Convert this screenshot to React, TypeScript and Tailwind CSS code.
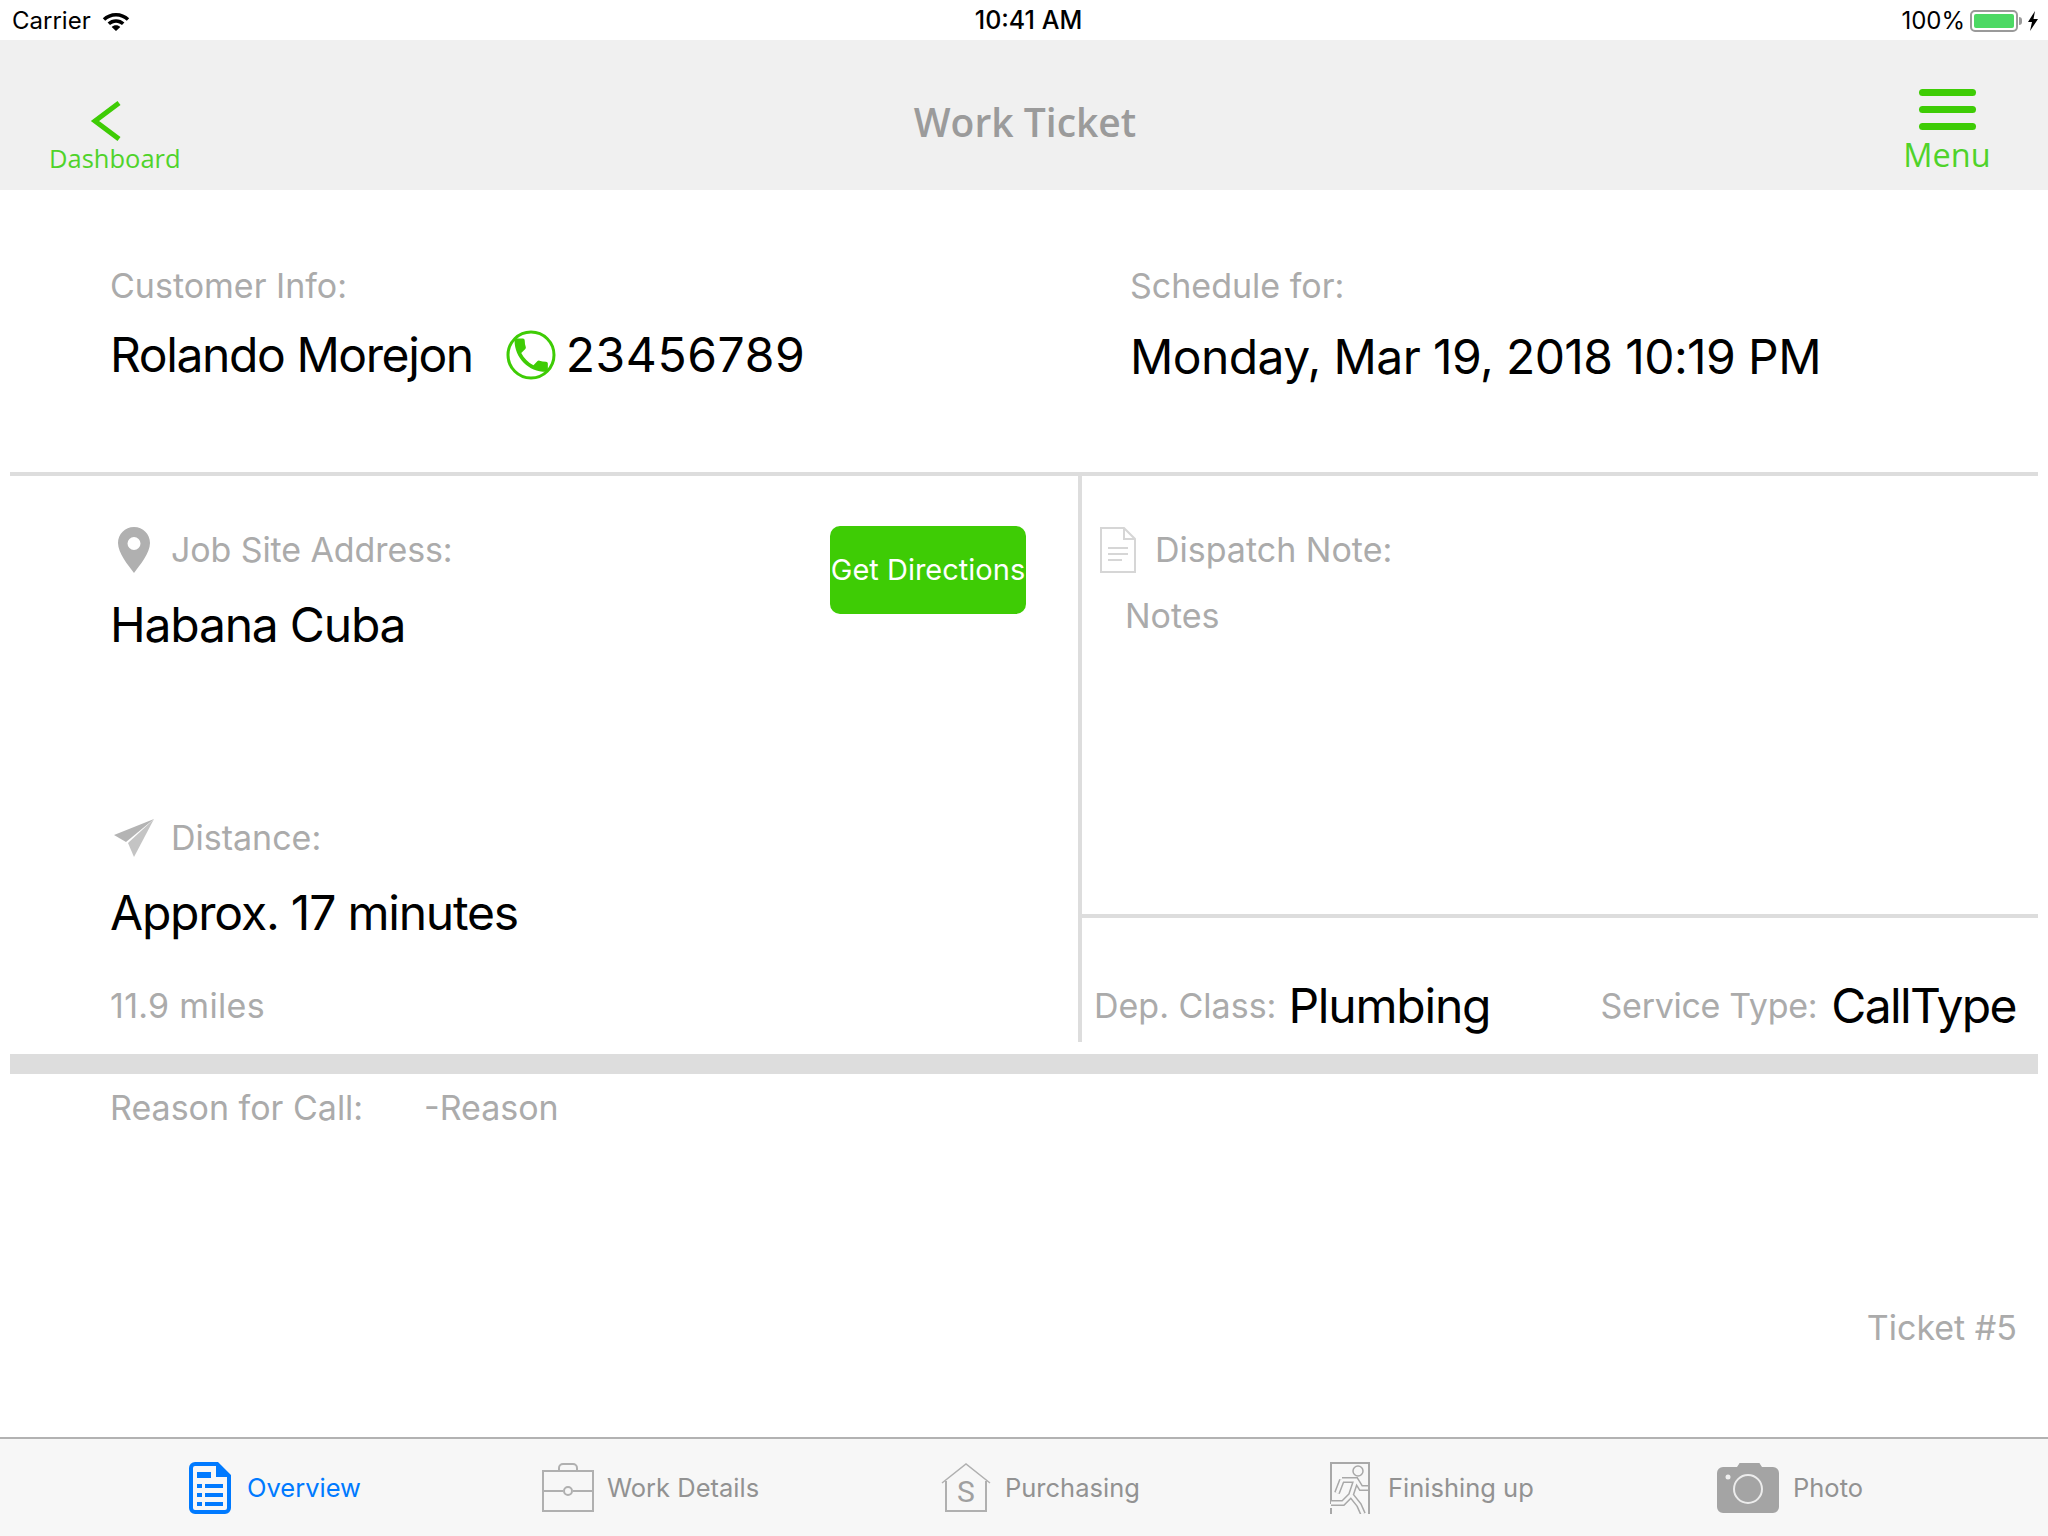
import React from "react";

const Wifi = () => (
  <svg width="30" height="22" viewBox="0 0 30 22" fill="#000">
    <path d="M15 3C9.8 3 5.2 5 1.8 8.2l2.4 2.6C7 8.200 10.800 6.600 15 6.600s8 1.600 10.800 4.200l2.400-2.600C24.800 5 20.200 3 15 3z" />
    <path d="M15 9.200c-3.200 0-6.200 1.200-8.400 3.300l2.400 2.600c1.600-1.500 3.700-2.400 6-2.400s4.400.9 6 2.400l2.400-2.600c-2.200-2.100-5.200-3.300-8.400-3.300z" />
    <path d="M15 15.200c-1.700 0-3.200.6-4.300 1.700L15 21l4.300-4.100c-1.100-1.100-2.600-1.700-4.300-1.700z" />
  </svg>
);

const Battery = () => (
  <div className="flex items-center">
    <div className="w-[48px] h-[22px] rounded-[5px] border-2 border-[#9a9a9a] p-[2px]">
      <div className="w-full h-full rounded-[2px] bg-[#4cd964]" />
    </div>
    <div className="w-[3px] h-[8px] bg-[#9a9a9a] rounded-r-sm ml-[1px]" />
  </div>
);

const Bolt = () => (
  <svg width="12" height="20" viewBox="0 0 12 20" fill="#000">
    <path d="M8 0 1 11h4l-2 9 8-12H6.500z" />
  </svg>
);

const PhoneRing = () => (
  <svg width="50" height="50" viewBox="0 0 50 50" className="shrink-0">
    <circle cx="25" cy="25" r="23" fill="none" stroke="#3ecc05" strokeWidth="3" />
    <g transform="translate(3 3) scale(1.85)">
      <path
        fill="#3ecc05"
        d="M6.620 10.790c1.440 2.830 3.760 5.140 6.590 6.590l2.200-2.200c.27-.27.67-.36 1.020-.24 1.120.37 2.330.57 3.570.57.55 0 1 .45 1 1V20c0 .55-.45 1-1 1-9.390 0-17-7.610-17-17 0-.55.45-1 1-1h3.500c.55 0 1 .45 1 1 0 1.250.2 2.450.57 3.570.11.35.03.74-.25 1.020l-2.200 2.200z"
      />
    </g>
  </svg>
);

const Pin = () => (
  <svg width="34" height="48" viewBox="0 0 34 48">
    <path
      fill="#b0b0b0"
      fillRule="evenodd"
      d="M17 1C8 1 1 8 1 17c0 10 10 22 16 30 6-8 16-20 16-30C33 8 26 1 17 1zm0 10a6.500 6.500 0 1 1 0 13 6.500 6.500 0 0 1 0-13z"
    />
  </svg>
);

const Plane = () => (
  <svg width="42" height="40" viewBox="0 0 42 40">
    <path fill="#b4b4b4" d="M41 1 1 17l12 7z" />
    <path fill="#c4c4c4" d="M41 1 15 25l6 14z" />
  </svg>
);

const DocIcon = () => (
  <svg width="36" height="46" viewBox="0 0 36 46" fill="none" stroke="#d6d6d6" strokeWidth="2">
    <path d="M1 1h23l11 11v33H1z" />
    <path d="M24 1v11h11" />
    <path d="M8 21h20M8 27h20M8 33h14" />
  </svg>
);

const OverviewIcon = () => (
  <svg width="42" height="52" viewBox="0 0 42 52" fill="#007aff">
    <path
      fillRule="evenodd"
      d="M6 0h23l13 13v33a6 6 0 0 1-6 6H6a6 6 0 0 1-6-6V6a6 6 0 0 1 6-6zm0 4a2 2 0 0 0-2 2v40a2 2 0 0 0 2 2h30a2 2 0 0 0 2-2V15H27V4z"
    />
    <path d="M8 10h14v6H8zM8 22h5v4H8zM16 22h18v4H16zM8 31h5v4H8zM16 31h18v4H16zM8 40h5v4H8zM16 40h18v4H16z" />
  </svg>
);

const BriefcaseIcon = () => (
  <svg width="52" height="50" viewBox="0 0 52 50" fill="none" stroke="#b0b0b0" strokeWidth="2">
    <path d="M1 8h50v40H1z" />
    <path d="M1 28h20M31 28h20" />
    <circle cx="26" cy="28" r="4" />
    <path d="M17 8V5a4 4 0 0 1 4-4h10a4 4 0 0 1 4 4v3" />
  </svg>
);

const HouseIcon = () => (
  <svg width="50" height="50" viewBox="0 0 50 50" fill="none" stroke="#b0b0b0" strokeWidth="1.500">
    <path d="M1 20 25 1l24 19" />
    <path d="M5 18v30h40V18" strokeWidth="2" />
    <text x="25" y="39" textAnchor="middle" fontSize="30" fill="#a0a0a0" stroke="none" fontFamily="Roboto, sans-serif">
      S
    </text>
  </svg>
);

// figure is a thick stroke with a thin bar-coloured one over it, so it reads as an outline
const figure = "M12 18h14l5 8h7M26 18l-5 15 8 10 4 9M12 18 7 31M21 33l-8 8H1";

const RunnerIcon = () => (
  <svg width="40" height="52" viewBox="0 0 40 52" fill="none">
    <path d="M1 42V1h38v52M1 46v6" stroke="#a8a8a8" strokeWidth="2" />
    <circle cx="28" cy="9" r="5" stroke="#a8a8a8" strokeWidth="1.500" />
    <path d={figure} stroke="#a8a8a8" strokeWidth="6" />
    <path d={figure} stroke="#f7f7f7" strokeWidth="3" />
  </svg>
);

const CameraIcon = () => (
  <svg width="62" height="50" viewBox="0 0 62 50">
    <path
      fill="#a4a4a4"
      d="M6 4h14l2-3a1 1 0 0 1 1-1h19a1 1 0 0 1 1 1l2 3h11a6 6 0 0 1 6 6v34a6 6 0 0 1-6 6H6a6 6 0 0 1-6-6V10a6 6 0 0 1 6-6z"
    />
    <circle cx="31" cy="26" r="14" fill="none" stroke="#ececec" strokeWidth="2" />
    <circle cx="11" cy="14" r="2.500" fill="#f0f0f0" />
  </svg>
);

const tabs = [
  { label: "Overview", icon: <OverviewIcon />, w: "w-[353px]", gap: "gap-[16px]", active: true },
  { label: "Work Details", icon: <BriefcaseIcon />, w: "w-[399px]", gap: "gap-[13px]" },
  { label: "Purchasing", icon: <HouseIcon />, w: "w-[389px]", gap: "gap-[14px]" },
  { label: "Finishing up", icon: <RunnerIcon />, w: "w-[387px]", gap: "gap-[18px]" },
  { label: "Photo", icon: <CameraIcon />, w: "w-[200px]", gap: "gap-[14px]" },
];

const labelCls = "text-[34px] leading-[40px] text-[#ababab]";
const bigCls = "text-[48px] leading-[56px] text-black";

export default function App() {
  return (
    <div className="w-[2048px] h-[1536px] bg-white flex flex-col font-['Inter',sans-serif] overflow-hidden">
      {/* status bar */}
      <div className="h-10 shrink-0 grid grid-cols-3 items-center pl-3 pr-[9px] pt-[2px] text-[24px] text-black">
        <div className="flex items-center gap-[10px]">
          <span>Carrier</span>
          <Wifi />
        </div>
        <div className="text-center font-medium text-[25px] pl-[6px]">10:41 AM</div>
        <div className="flex items-center justify-end gap-[5px]">
          <span>100%</span>
          <Battery />
          <Bolt />
        </div>
      </div>

      {/* nav bar */}
      <div className="h-[150px] shrink-0 bg-[#f0f0f0] grid grid-cols-3 font-['Open_Sans',sans-serif]">
        <div className="pl-[49px] pt-[60px] flex flex-col items-start">
          <div className="w-[130px] flex justify-center pr-[16px]">
            <svg width="32" height="42" viewBox="0 0 32 42" fill="none" stroke="#3ecc05" strokeWidth="5">
              <path d="M29 3 5 21l24 18" />
            </svg>
          </div>
          <span className="text-[25.500px] leading-[33px] text-[#4fd32a]">Dashboard</span>
        </div>
        <div className="flex justify-center pt-[57px] pl-[2px] text-[39px] leading-[50px] font-semibold text-[#9b9b9b]">
          Work Ticket
        </div>
        <div className="flex flex-col items-end pr-[58px] pt-[49px]">
          <div className="w-[86px] flex flex-col items-center">
            <div className="flex flex-col gap-[10px] w-[57px]">
              <div className="h-[7px] rounded-full bg-[#3ecc05]" />
              <div className="h-[7px] rounded-full bg-[#3ecc05]" />
              <div className="h-[7px] rounded-full bg-[#3ecc05]" />
            </div>
            <span className="text-[32.500px] leading-[44px] mt-[3px] text-[#4fd32a]">Menu</span>
          </div>
        </div>
      </div>

      {/* customer + schedule */}
      <div className="h-[286px] shrink-0 mx-[10px] border-b-4 border-[#dddddd] flex pt-[76px]">
        <div className="w-[1120px] pl-[100px]">
          <div className={labelCls}>Customer Info:</div>
          <div className={`${bigCls} mt-[21px] flex items-center`}>
            <span className="tracking-[-1.4px]">Rolando Morejon</span>
            <span className="ml-[33px] mr-[10px]">
              <PhoneRing />
            </span>
            <span className="tracking-[0.6px]">23456789</span>
          </div>
        </div>
        <div>
          <div className={labelCls}>Schedule for:</div>
          <div className={`${bigCls} mt-[23px]`}>
            <span className="tracking-[-0.6px]">Monday, Mar 19, 2018 10:19 PM</span>
          </div>
        </div>
      </div>

      {/* middle panels */}
      <div className="h-[566px] shrink-0 mx-[10px] flex">
        <div className="w-[1072px] shrink-0 border-r-4 border-[#dddddd] pl-[100px] pt-[50px] pr-[52px]">
          <div className="flex justify-between items-start h-[215px]">
            <div>
              <div className="flex items-center gap-[20px] pl-[7px]">
                <Pin />
                <span className={`${labelCls} tracking-[-0.1px]`}>Job Site Address:</span>
              </div>
              <div className={`${bigCls} mt-[23px] tracking-[-1.2px]`}>Habana Cuba</div>
            </div>
            <div className="w-[196px] h-[88px] rounded-[10px] bg-[#3ecc05] text-white text-[29px] flex items-center justify-center whitespace-nowrap">
              Get Directions
            </div>
          </div>
          <div className="flex items-center gap-[16px] pl-[3px] mt-[77px]">
            <Plane />
            <span className={labelCls}>Distance:</span>
          </div>
          <div className={`${bigCls} mt-[27px] tracking-[-1.2px]`}>Approx. 17 minutes</div>
          <div className={`${labelCls} mt-[45px] tracking-[0.3px]`}>11.9 miles</div>
        </div>
        <div className="flex-1 flex flex-col">
          <div className="h-[442px] shrink-0 border-b-4 border-[#dddddd] pt-[51px]">
            <div className="flex items-center gap-[19px] pl-[18px]">
              <DocIcon />
              <span className={labelCls}>Dispatch Note:</span>
            </div>
            <div className={`${labelCls} mt-[23px] pl-[43px]`}>Notes</div>
          </div>
          <div className="flex items-center justify-between pl-[12px] pr-[22px] pt-[60px] whitespace-nowrap">
            <div className="flex items-center gap-[12px]">
              <span className={labelCls}>Dep. Class:</span>
              <span className={`${bigCls} tracking-[-1.2px]`}>Plumbing</span>
            </div>
            <div className="flex items-center gap-[14px]">
              <span className={`${labelCls} tracking-[-0.3px]`}>Service Type:</span>
              <span className={`${bigCls} tracking-[-1.6px]`}>CallType</span>
            </div>
          </div>
        </div>
      </div>

      <div className="h-[20px] shrink-0 mx-[10px] mt-[12px] bg-[#dddddd]" />

      {/* reason */}
      <div className="flex-1 px-[110px] pt-[14px]">
        <div className={`${labelCls} flex`}>
          <span className="w-[314px]">Reason for Call:</span>
          <span>-Reason</span>
        </div>
        <div className={`${labelCls} flex justify-end mt-[180px] -mr-[79px]`}>Ticket #5</div>
      </div>

      {/* tab bar */}
      <div className="h-[99px] shrink-0 bg-[#f7f7f7] border-t-2 border-[#b2b2b2] flex items-center pl-[189px] pt-[1px] text-[25.500px]">
        {tabs.map((t) => (
          <div key={t.label} className={`${t.w} ${t.gap} flex items-center shrink-0`}>
            {t.icon}
            <span className={t.active ? "text-[#007aff]" : "text-[#929292]"}>{t.label}</span>
          </div>
        ))}
      </div>
    </div>
  );
}
